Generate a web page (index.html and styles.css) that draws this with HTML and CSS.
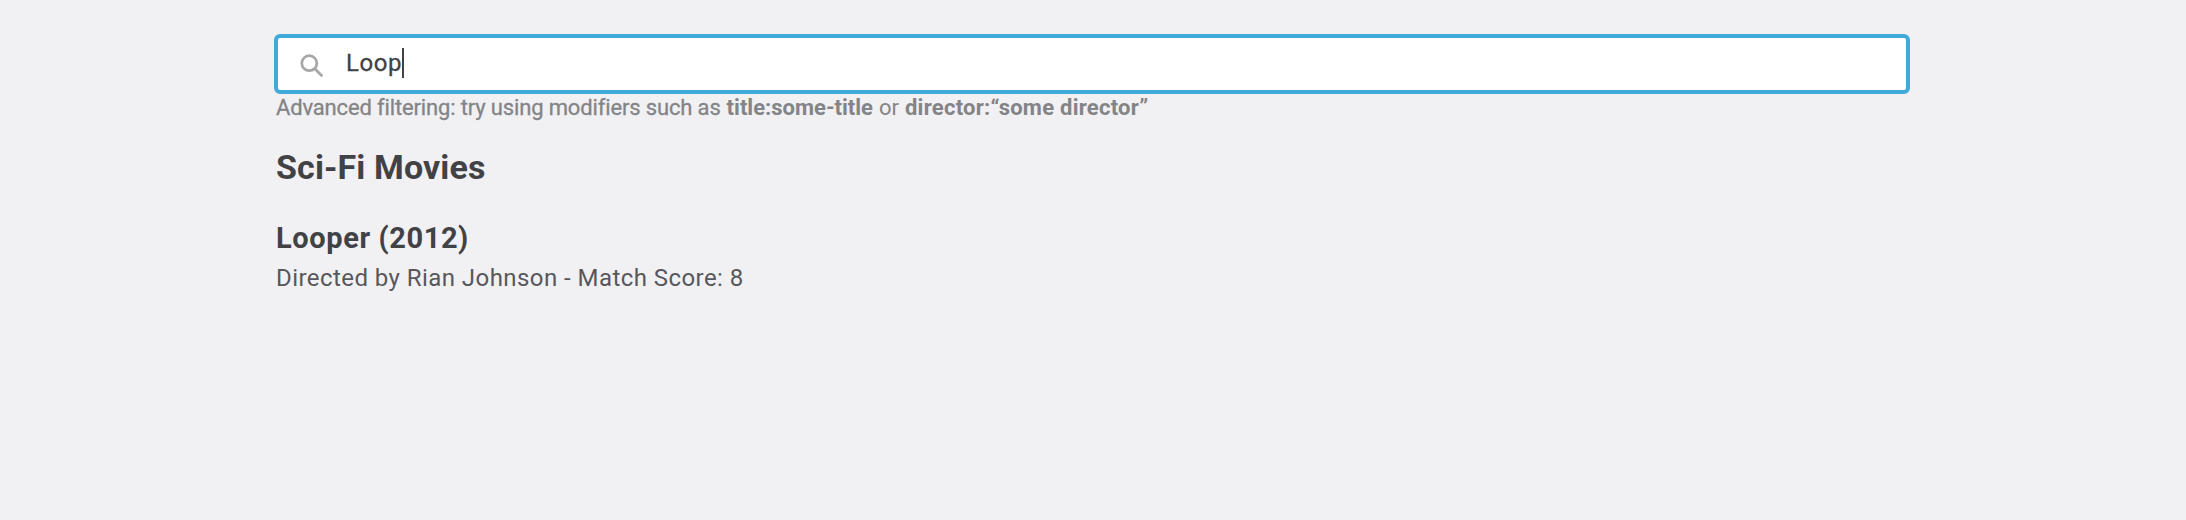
FILE: index.html
```html
<!DOCTYPE html>
<html lang="en">
<head>
<meta charset="utf-8">
<title>Sci-Fi Movies</title>
<link rel="stylesheet" href="styles.css">
</head>
<body>
<main class="page">
  <div class="search">
    <svg class="search-icon" viewBox="0 0 24 24" width="24" height="24" fill="none" stroke="#a7a7a9" stroke-width="2.7"><circle cx="9.3" cy="9.2" r="7.5"/><path d="M14.8 14.8L22.3 22.3"/></svg>
    <span class="search-text">Loop</span><span class="caret"></span>
  </div>
  <p class="hint"><span class="hint-lead">Advanced filtering: try using modifiers such as</span> <strong>title:some-title</strong> <span>or</span> <strong class="mod-director">director:“some director”</strong></p>
  <h1 class="heading">Sci-Fi Movies</h1>
  <article class="movie">
    <h2 class="movie-title">Looper (2012)</h2>
    <p class="movie-meta">Directed by Rian Johnson - Match Score: 8</p>
  </article>
</main>
</body>
</html>
```
FILE: styles.css
```css
body {
  margin: 0;
  background: #f1f1f4;
  color: #414246;
  font-family: Roboto, "Liberation Sans", sans-serif;
}
.page {
  width: 1636px;
  margin-left: 274px;
  padding-top: 34px;
}
.search {
  box-sizing: border-box;
  height: 60px;
  display: flex;
  align-items: center;
  padding: 0 0 2px 22px;
  background: #fff;
  border: 4px solid #40aada;
  border-radius: 6px;
}
.search-icon {
  margin-top: 5px;
}
.search-text {
  margin-left: 22px;
  font-size: 24px;
  line-height: 30px;
  letter-spacing: 0.6px;
  -webkit-text-stroke: 0.3px #414246;
}
.caret {
  width: 2px;
  height: 30px;
  background: #414246;
}
.hint {
  display: flex;
  gap: 6px;
  margin: 0 0 0 2px;
  font-size: 22px;
  line-height: 28px;
  color: #838487;
  white-space: nowrap;
}
.hint-lead {
  letter-spacing: -0.15px;
  -webkit-text-stroke: 0.3px #838487;
}
.mod-director {
  letter-spacing: 0.25px;
}
.heading {
  margin: 24px 0 0 2px;
  font-size: 34px;
  line-height: 42px;
  letter-spacing: 0.12px;
}
.movie {
  margin: 32px 0 0 2px;
}
.movie-title {
  margin: 0;
  font-size: 29px;
  line-height: 36px;
  letter-spacing: 0.6px;
}
.movie-meta {
  margin: 7px 0 0;
  font-size: 24px;
  line-height: 30px;
  letter-spacing: 0.44px;
  color: #57585b;
}
```
